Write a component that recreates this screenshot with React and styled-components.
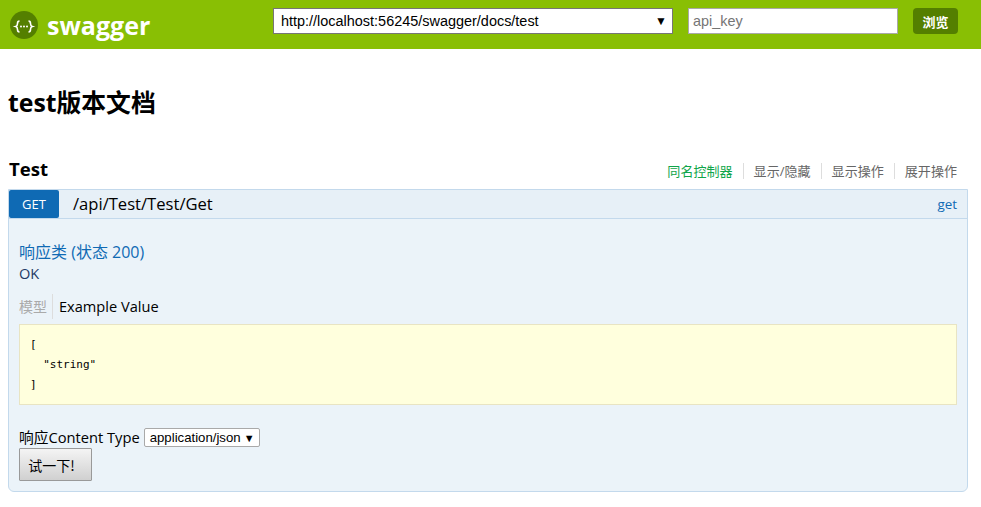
import React from 'react'
import styled, { createGlobalStyle } from 'styled-components'

const GlobalStyle = createGlobalStyle`
  html, body {
    margin: 0;
    padding: 0;
    background: #fff;
  }
  body {
    font-family: "Open Sans", "Noto Sans CJK SC", sans-serif;
    font-size: 14px;
    color: #000;
  }
  * {
    box-sizing: border-box;
  }
`

const App = () => {
  return (
    <>
      <GlobalStyle />
      <Header>
        <Logo>
          <LogoIcon viewBox="0 0 28 28">
            <circle cx="14" cy="14" r="14" fill="#547f00" />
            <path d="M9.500 10c-2 0-2 1-2 2.500s0 2.500-1.800 3c1.800.5 1.800 1.500 1.800 3s0 2.500 2 2.500M18.500 10c2 0 2 1 2 2.500s0 2.500 1.800 3c-1.800.5-1.800 1.500-1.800 3s0 2.500-2 2.500" fill="none" stroke="#fff" strokeWidth="1.600" />
            <circle cx="11" cy="15.500" r="1" fill="#fff" />
            <circle cx="14" cy="15.500" r="1" fill="#fff" />
            <circle cx="17" cy="15.500" r="1" fill="#fff" />
          </LogoIcon>
          <LogoText>swagger</LogoText>
        </Logo>
        <UrlSelect>
          <span>http://localhost:56245/swagger/docs/test</span>
          <Caret>▼</Caret>
        </UrlSelect>
        <ApiKey placeholder="api_key" />
        <ExploreButton>浏览</ExploreButton>
      </Header>

      <Main>
        <PageTitle>test版本文档</PageTitle>
        <ResourceHead>
          <ResourceName>Test</ResourceName>
          <ResourceLinks>
            <ResourceLink $green>同名控制器</ResourceLink>
            <ResourceLink>显示/隐藏</ResourceLink>
            <ResourceLink>显示操作</ResourceLink>
            <ResourceLink>展开操作</ResourceLink>
          </ResourceLinks>
        </ResourceHead>

        <Operation>
          <OperationHead>
            <Method>GET</Method>
            <OperationPath>/api/Test/Test/Get</OperationPath>
            <OperationNick>get</OperationNick>
          </OperationHead>
          <OperationBody>
            <ResponseTitle>响应类 (状态 200)</ResponseTitle>
            <ResponseText>OK</ResponseText>
            <SignatureTabs>
              <SignatureTab $muted>模型</SignatureTab>
              <SignatureTab>Example Value</SignatureTab>
            </SignatureTabs>
            <CodeBlock>{'[\n  "string"\n]'}</CodeBlock>
            <ContentType>
              响应Content Type
              <TypeSelect>
                application/json
                <TypeCaret>▼</TypeCaret>
              </TypeSelect>
            </ContentType>
            <TryButton>试一下!</TryButton>
          </OperationBody>
        </Operation>
      </Main>
    </>
  )
}

const Header = styled.header`
  height: 49px;
  background-color: #89bf04;
  display: flex;
  align-items: flex-start;
  padding: 7px 0 0 10px;
`

const Logo = styled.div`
  width: 263px;
  display: flex;
  align-items: center;
  gap: 9px;
  height: 36px;
`

const LogoIcon = styled.svg`
  width: 28px;
  height: 28px;
`

const LogoText = styled.span`
  color: #fff;
  font-size: 25px;
  font-weight: 700;
`

const UrlSelect = styled.div`
  width: 400px;
  height: 26px;
  margin-top: 1px;
  background: #fff;
  border: 1px solid #767676;
  padding: 0 5px 0 7px;
  display: flex;
  align-items: center;
  justify-content: space-between;
  font-family: "Liberation Sans", Arial, sans-serif;
  font-size: 14.45px;
`

const Caret = styled.span`
  font-size: 12px;
`

const ApiKey = styled.input`
  width: 210px;
  height: 26px;
  margin: 1px 0 0 15px;
  border: 1px solid #a9a9a9;
  padding: 0 4px;
  font-family: "Liberation Sans", Arial, sans-serif;
  font-size: 14.4px;
  &::placeholder {
    color: #757575;
  }
`

const ExploreButton = styled.button`
  width: 45px;
  height: 26px;
  margin: 1px 0 0 15px;
  border: none;
  border-radius: 4px;
  background: #547f00;
  color: #fff;
  font-family: "Noto Sans CJK SC", sans-serif;
  font-size: 13px;
  font-weight: 700;
  padding: 0;
`

const Main = styled.main`
  padding: 0 13px 0 8px;
`

const PageTitle = styled.h1`
  margin: 0;
  padding-top: 35px;
  height: 107px;
  font-size: 24.8px;
  line-height: 36px;
  font-weight: 700;
`

const ResourceHead = styled.div`
  display: flex;
  justify-content: space-between;
  align-items: flex-end;
  height: 33px;
  padding-bottom: 8px;
`

const ResourceName = styled.h2`
  margin: 0 0 0 1px;
  font-size: 18.6px;
  line-height: 24px;
  font-weight: 700;
`

const ResourceLinks = styled.div`
  display: flex;
  margin-bottom: 2px;
`

const ResourceLink = styled.a`
  font-size: 13.05px;
  line-height: 16px;
  padding: 0 10px;
  color: ${props => (props.$green ? '#10a54a' : '#666')};
  border-right: 1px solid #ddd;
  &:last-child {
    border-right: none;
    padding-right: 11px;
  }
`

const Operation = styled.section`
  border: 1px solid #c3d9ec;
  border-radius: 0 0 6px 6px;
  background-color: #ebf3f9;
`

const OperationHead = styled.div`
  height: 29px;
  display: flex;
  align-items: center;
  background-color: #e7f0f7;
  border-bottom: 1px solid #c3d9ec;
`

const Method = styled.span`
  width: 50px;
  height: 28px;
  background-color: #0f6ab4;
  color: #fff;
  border-radius: 2px;
  font-size: 13px;
  font-weight: 400;
  display: flex;
  align-items: center;
  justify-content: center;
`

const OperationPath = styled.span`
  flex: 1;
  margin-left: 14px;
  padding-bottom: 2px;
  font-size: 16.6px;
`

const OperationNick = styled.span`
  color: #0f6ab4;
  font-size: 13.4px;
  margin-right: 10px;
`

const OperationBody = styled.div`
  padding: 23px 10px 10px;
`

const ResponseTitle = styled.h4`
  margin: 0;
  font-size: 16px;
  line-height: 20px;
  font-weight: 400;
  color: #0f6ab4;
`

const ResponseText = styled.div`
  font-size: 14.6px;
  line-height: 22px;
  color: #1f3a66;
`

const SignatureTabs = styled.div`
  display: flex;
  align-items: center;
  margin-top: 10px;
  height: 25px;
`

const SignatureTab = styled.span`
  font-size: ${props => (props.$muted ? '14px' : '14.6px')};
  line-height: 25px;
  padding-right: 5px;
  margin-right: 6px;
  color: ${props => (props.$muted ? '#aaa' : '#000')};
  border-right: ${props => (props.$muted ? '1px solid #ddd' : 'none')};
`

const CodeBlock = styled.pre`
  margin: 5px 0 0;
  height: 81px;
  padding: 10px 10px;
  background-color: #ffffdd;
  border: 1px solid #e8e4c3;
  font-family: "DejaVu Sans Mono", monospace;
  font-size: 11px;
  line-height: 20px;
`

const ContentType = styled.div`
  margin-top: 23px;
  height: 20px;
  display: flex;
  align-items: flex-start;
  gap: 4px;
  font-size: 14.7px;
  line-height: 18px;
`

const TypeSelect = styled.span`
  width: 116px;
  height: 19px;
  background: #fff;
  border: 1px solid #a9a9a9;
  border-radius: 2px;
  padding: 1px 4px 0 5px;
  display: flex;
  align-items: center;
  justify-content: space-between;
  font-family: "Liberation Sans", Arial, sans-serif;
  font-size: 13.2px;
`

const TypeCaret = styled.span`
  font-size: 11px;
`

const TryButton = styled.button`
  display: block;
  width: 73px;
  height: 33px;
  padding: 0 8px 0 0;
  border: 1px solid #999;
  border-radius: 1px;
  background: linear-gradient(#f4f4f4, #d0d0d0);
  font-family: "Noto Sans CJK SC", sans-serif;
  font-size: 14px;
  color: #000;
`

export default App
